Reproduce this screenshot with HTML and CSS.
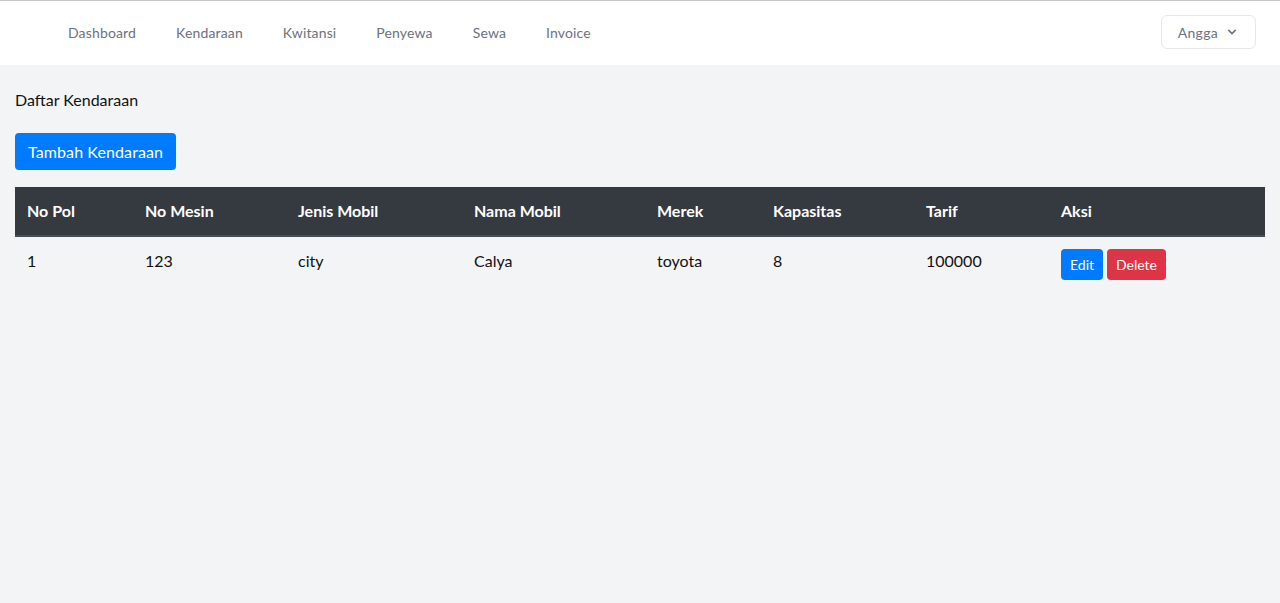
FILE: index.html
```html
<!DOCTYPE html>
<html lang="id">
<head>
<meta charset="utf-8">
<title>Daftar Kendaraan</title>
<link rel="stylesheet" href="styles.css">
</head>
<body>
<nav class="topnav">
  <div class="links">
    <a href="#">Dashboard</a>
    <a href="#">Kendaraan</a>
    <a href="#">Kwitansi</a>
    <a href="#">Penyewa</a>
    <a href="#">Sewa</a>
    <a href="#">Invoice</a>
  </div>
  <button class="user">Angga
    <svg width="16" height="16" viewBox="0 0 20 20" fill="currentColor"><path fill-rule="evenodd" d="M5.293 7.293a1 1 0 011.414 0L10 10.586l3.293-3.293a1 1 0 111.414 1.414l-4 4a1 1 0 01-1.414 0l-4-4a1 1 0 010-1.414z" clip-rule="evenodd"/></svg>
  </button>
</nav>
<main class="content">
  <div class="title">Daftar Kendaraan</div>
  <a class="btn btn-primary btn-lg" href="#">Tambah Kendaraan</a>
  <table class="data">
    <colgroup>
      <col class="c1"><col class="c2"><col class="c3"><col class="c4"><col class="c5"><col class="c6"><col class="c7"><col class="c8">
    </colgroup>
    <thead>
      <tr><th>No Pol</th><th>No Mesin</th><th>Jenis Mobil</th><th>Nama Mobil</th><th>Merek</th><th>Kapasitas</th><th>Tarif</th><th>Aksi</th></tr>
    </thead>
    <tbody>
      <tr><td>1</td><td>123</td><td>city</td><td>Calya</td><td>toyota</td><td>8</td><td>100000</td>
        <td><div class="actions"><a class="btn btn-primary btn-sm" href="#">Edit</a><a class="btn btn-danger btn-sm" href="#">Delete</a></div></td></tr>
    </tbody>
  </table>
</main>
</body>
</html>
```
FILE: styles.css
```css
* { box-sizing: border-box; }
html, body { margin: 0; }
body {
  font-family: "Lato", "Noto Sans", sans-serif;
  background: #f3f4f6;
  color: #111827;
  border-top: 1px solid #c8c8c8;
  min-height: 603px;
}
.topnav {
  height: 64px;
  background: #fff;
  display: flex;
  align-items: center;
  justify-content: space-between;
  padding: 0 24px 0 68px;
}
.links { display: flex; gap: 40px; margin-top: -2px; }
.links a {
  color: #6b7280;
  font-size: 14px;
  letter-spacing: 0.15px;
  text-decoration: none;
}
.user {
  display: flex;
  align-items: center;
  gap: 6px;
  height: 34px;
  margin-top: -2px;
  padding: 0 15px 0 16px;
  background: #fff;
  border: 1px solid #e5e7eb;
  border-radius: 6px;
  color: #6b7280;
  font-family: inherit;
  font-size: 14px;
  letter-spacing: 0.3px;
}
.content { padding: 24px 15px; }
.title { font-size: 16px; margin-bottom: 22px; line-height: 22px; color: #111; }
.btn {
  display: inline-block;
  color: #fff;
  text-decoration: none;
  border-radius: 4px;
}
.btn-primary { background: #007bff; }
.btn-danger { background: #dc3545; }
.btn-lg { font-size: 16px; height: 37px; line-height: 37px; padding: 0 13px; letter-spacing: 0.1px; }
.btn-sm { font-size: 14px; height: 31px; line-height: 31px; padding: 0 9px; }
.data {
  margin-top: 17px;
  width: 1250px;
  border-collapse: collapse;
  table-layout: fixed;
  font-size: 16px;
  line-height: 24px;
}
.c1 { width: 118px; } .c2 { width: 153px; } .c3 { width: 176px; } .c4 { width: 183px; }
.c5 { width: 116px; } .c6 { width: 153px; } .c7 { width: 135px; } .c8 { width: 216px; }
.data th {
  background: #343a40;
  color: #fff;
  text-align: left;
  font-weight: 700;
  padding: 12px;
  border-bottom: 2px solid #454d55;
}
.data td { padding: 12px; color: #111; vertical-align: top; }
.actions { display: flex; gap: 4px; }
```
